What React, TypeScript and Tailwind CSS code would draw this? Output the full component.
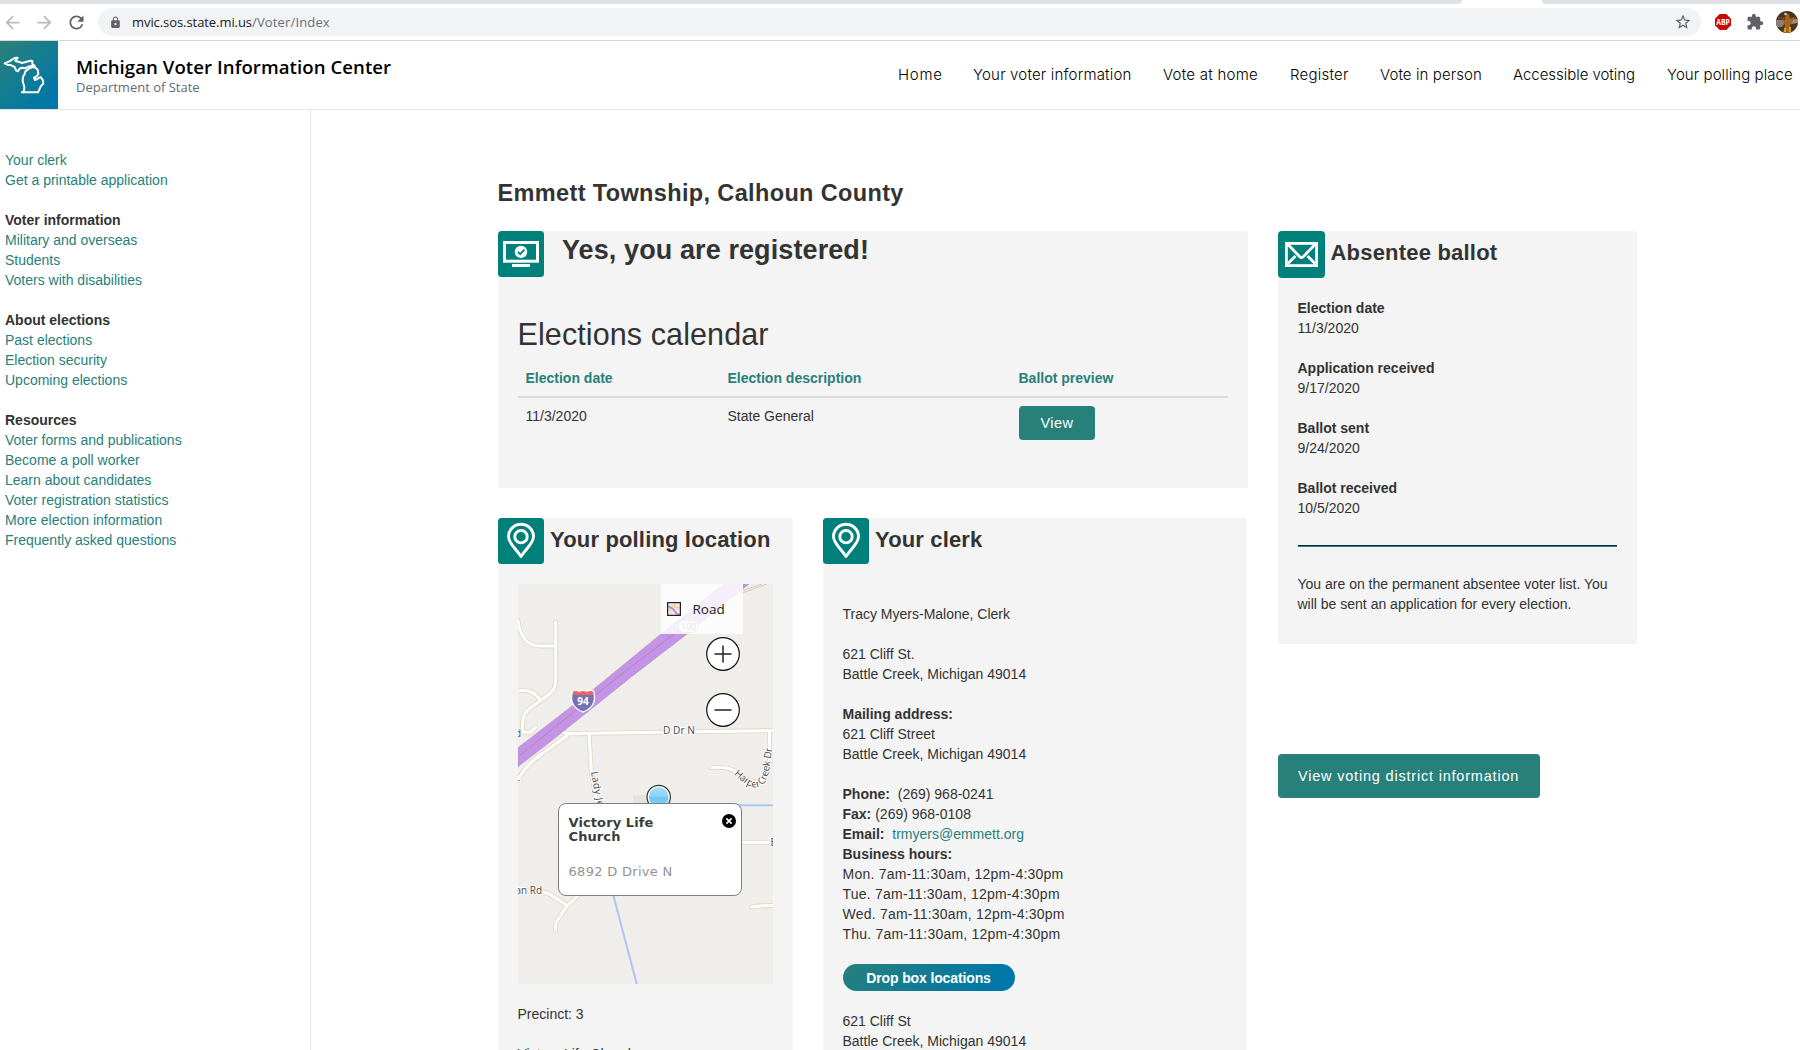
import React from "react";
import { MdArrowBack, MdArrowForward, MdExtension, MdLock, MdRefresh, MdStarBorder } from "react-icons/md";

const navItems = [
  { label: "Home", cls: "w-[43px] tracking-[0.7px]" },
  { label: "Your voter information", cls: "w-[158px] tracking-[0.19px]" },
  { label: "Vote at home", cls: "w-[95px] tracking-[0.25px]" },
  { label: "Register", cls: "w-[58px] tracking-[0.24px]" },
  { label: "Vote in person", cls: "w-[101px] tracking-[0.09px]" },
  { label: "Accessible voting", cls: "w-[122px] tracking-[-0.04px]" },
  { label: "Your polling place", cls: "w-[125px] tracking-[0.07px]" },
];

const sidebar = [
  { links: ["Your clerk", "Get a printable application"] },
  { title: "Voter information", links: ["Military and overseas", "Students", "Voters with disabilities"] },
  { title: "About elections", links: ["Past elections", "Election security", "Upcoming elections"] },
  {
    title: "Resources",
    links: [
      "Voter forms and publications",
      "Become a poll worker",
      "Learn about candidates",
      "Voter registration statistics",
      "More election information",
      "Frequently asked questions",
    ],
  },
];

const absentee = [
  ["Election date", "11/3/2020"],
  ["Application received", "9/17/2020"],
  ["Ballot sent", "9/24/2020"],
  ["Ballot received", "10/5/2020"],
];

const hours = ["Mon.", "Tue.", "Wed.", "Thu."];

function BrowserBar() {
  return (
    <div className="flex h-[41px] shrink-0 flex-col border-b border-[#d5d7da] bg-white">
      <div className="flex h-1 shrink-0">
        <div className="w-[1462px] rounded-br-[4px] bg-[#dee1e6]" />
        <div className="w-[80px]" />
        <div className="flex-1 rounded-bl-[4px] bg-[#dee1e6]" />
      </div>
      <div className="flex h-9 items-center">
        <div className="flex w-[98px] items-center gap-[11px] pl-[1.500px]">
          <MdArrowBack size={21} color="#b9bbbe" />
          <MdArrowForward size={21} color="#b9bbbe" />
          <MdRefresh size={21} color="#5f6368" />
        </div>
        <div className="flex h-7 w-[1603px] items-center rounded-full bg-[#f1f3f4] pr-[9px] pl-[11px] font-['Open_Sans',sans-serif] text-[13px] leading-[18px]">
          <MdLock size={13} color="#5f6368" />
          <span className="ml-[10px] tracking-[-0.07px] text-[#202124]">mvic.sos.state.mi.us</span>
          <span className="flex-1 tracking-[0.15px] text-[#6b6f74]">/Voter/Index</span>
          <MdStarBorder size={18} color="#5f6368" />
        </div>
        <div className="ml-[14px] flex w-[85px] items-center">
          <svg width="16" height="16" viewBox="0 0 16 16">
            <path d="M4.700 0h6.600L16 4.700v6.600L11.300 16H4.700L0 11.300V4.700z" fill="#cc0606" />
            <text x="8" y="10.900" textAnchor="middle" fontFamily="Open Sans, sans-serif" fontWeight="700" fontSize="8" textLength="13.600" lengthAdjust="spacingAndGlyphs" fill="#fff">ABP</text>
          </svg>
          <MdExtension size={18} color="#5f6368" className="ml-[14.500px]" />
          <svg width="22" height="22" viewBox="0 0 22 22" className="ml-[12.500px]">
            <clipPath id="avatar"><circle cx="11" cy="11" r="11" /></clipPath>
            <g clipPath="url(#avatar)">
              <rect width="22" height="22" fill="#4b3420" />
              <path d="M0 9h7l2 3-3 4H0z" fill="#8a8078" />
              <path d="M14 8h8v4l-7 1z" fill="#a98a6c" />
              <path d="M2 6h18v2H2z" fill="#6b4522" />
              <path d="M6 8l3 1 1-6 3 0 1 6 4-3-2 6-2 2 1 8H7l2-8z" fill="#a9651b" />
              <circle cx="9.500" cy="3" r="1.300" fill="#cfd3d8" />
              <path d="M8 17h2v4H8zM13 16h2v5h-2z" fill="#d0a026" />
            </g>
          </svg>
        </div>
      </div>
    </div>
  );
}

function Header() {
  return (
    <header className="flex h-[69px] shrink-0 border-b border-[#e6e6e6]">
      <div className="h-[68px] w-[58px] bg-[linear-gradient(135deg,#28817a_5%,#0077a8_85%)]">
        <svg width="58" height="68" viewBox="0 0 174 204" fill="none" stroke="#fff" strokeWidth="6" strokeLinejoin="round">
          <path d="M14 67L28 61 44 51 53 50 46 60 55 62 66 66 80 62 92 59 97 60 97 68 104 75 94 74 82 78 76 82 66 80 58 84 54 91 48 88 44 78 34 73 22 71Z" />
          <path d="M98 78L87 83 76 91 74 99 69 107 68 120 73 138 72 150 66 154 92 154 114 154 118 146 122 136 130 128 128 116 121 108 112 114 105 117 102 110 110 106 115 99 113 86 105 79Z" />
        </svg>
      </div>
      <div className="pt-[14px] pl-[18px] font-['Open_Sans',sans-serif]">
        <div className="text-[18.600px] leading-6 font-semibold tracking-[0.06px] whitespace-nowrap text-black">Michigan Voter Information Center</div>
        <div className="-mt-px text-[13px] leading-[18px] text-[#5f6b75]">Department of State</div>
      </div>
      <nav className="ml-auto flex gap-8 pt-6 pr-[8px] font-['Inter',sans-serif] text-[15px] leading-5 font-light text-black">
        {navItems.map((n) => (
          <a key={n.label} className={`${n.cls} whitespace-nowrap`}>{n.label}</a>
        ))}
      </nav>
    </header>
  );
}

function PinTile() {
  return (
    <svg width="46" height="46" viewBox="0 0 46 46" className="shrink-0">
      <rect width="46" height="46" rx="3.500" fill="#00807b" />
      <g fill="none" stroke="#fff" strokeWidth="2.900">
        <path d="M23 38.500C17.500 30 10.500 25.500 10.500 18.500a12.500 12.200 0 0 1 25 0C35.500 25.500 28.500 30 23 38.500Z" strokeLinejoin="round" />
        <circle cx="23" cy="18.700" r="6.200" />
      </g>
    </svg>
  );
}

function MonitorTile() {
  return (
    <svg width="46" height="46" viewBox="0 0 46 46" className="shrink-0">
      <rect width="46" height="46" rx="3.500" fill="#00807b" />
      <rect x="6.500" y="11.500" width="33" height="18.700" fill="none" stroke="#fff" strokeWidth="3" />
      <rect x="14" y="33" width="18" height="3" fill="#fff" />
      <circle cx="23" cy="20.900" r="6.200" fill="#fff" />
      <path d="M20 21l2.200 2.200 4.200-4.600" fill="none" stroke="#00807b" strokeWidth="1.900" />
    </svg>
  );
}

function EnvelopeTile() {
  return (
    <svg width="47" height="47" viewBox="0 0 47 47" className="shrink-0">
      <rect width="47" height="47" rx="4" fill="#00807b" />
      <g fill="none" stroke="#fff" strokeWidth="2.800">
        <rect x="8.400" y="12.400" width="30.200" height="22.200" />
        <path d="M10 13.500L21.500 25.500Q23.500 27.500 25.500 25.500L37 13.500M10 32.500L17.500 25M37 32.500L29.500 25" />
      </g>
    </svg>
  );
}

const roads = [
  "M0 37C2 53 10 62 22 62H37",
  "M37.700 38V99C37.700 104 35 107 30 111L11 125C5 130 4.500 135 4.500 148L12 148.500 18 143",
  "M0 106.700C12 106 17 108 22 116",
  "M-3 203C6 178 25 170 50 151",
  "M44 148C52 151 62 149.500 71 149.300L255 146.500",
  "M71 150L73.500 190 80 225",
  "M251.500 147V165C253 180 249 196 240 198C232 199 225 192 217 187 210 183 202 183 193.500 183.500",
  "M220 258.300H258",
  "M234 323Q239 321.500 258 321.500",
  "M-2 306L24 308C32 309 36 313 49 321.700M62 310L49 321.700 39 337Q37 340 37.500 346",
];

function PollingMap() {
  return (
    <div className="relative h-[400px] w-[255px] overflow-hidden bg-[#efeeea]">
      <svg width="255" height="400" viewBox="0 0 255 400" className="block">
        <rect x="115" y="211" width="16" height="12" fill="#e7e3dc" />
        <g fill="none" stroke="#e3d8c4" strokeWidth="4.800" strokeLinecap="round">
          {roads.map((d) => <path key={d} d={d} />)}
        </g>
        <g fill="none" stroke="#fff" strokeWidth="3" strokeLinecap="round">
          {roads.map((d) => <path key={d} d={d} />)}
        </g>
        <g fill="none" stroke="#adc6f3" strokeWidth="2">
          <path d="M215 221.300H255M95 310L119 401" />
        </g>
        <g fill="none" stroke="#cfc0ae" strokeWidth="0.800">
          <path d="M180 22L244 0M180 25L249 0" />
        </g>
        <path d="M0 163.700L75 105.700 143 50 205 0H231L169 50 112 94 32 158 0 182.700Z" fill="#c493e6" stroke="#b39ab8" strokeWidth="0.600" />
        <path d="M0 173L32 147 100 93 156 50 218 0" fill="none" stroke="#a98bb0" strokeWidth="1" />
        <rect x="160.500" y="36.500" width="20" height="12" rx="6" fill="#fff" stroke="#999" />
        <g fontFamily="Open Sans, sans-serif" fontSize="10" fill="#484848" stroke="#fff" strokeWidth="2" paintOrder="stroke">
          <text x="170.500" y="46" textAnchor="middle" fontSize="9" fill="#000" strokeWidth="0">100</text>
          <text x="145" y="150" fontSize="10" textLength="32" lengthAdjust="spacingAndGlyphs">D Dr N</text>
          <text x="-3" y="152.500">d</text>
          <text x="-2" y="201" fontSize="9">r</text>
          <text x="252.500" y="261.500">E</text>
          <text x="-2.500" y="310">an Rd</text>
          <text transform="translate(73 188) rotate(80)" textLength="42">Lady Jen</text>
          <path id="harper" d="M215.500 190C226 199 230 203.500 238 203.500C250 203 251 190 255 158" fill="none" stroke="none" />
          <text textLength="73"><textPath href="#harper">Harper Creek Dr</textPath></text>
        </g>
        <path d="M54.500 107L58.500 106.500 61 107.500 65 106.500 69 107.500 71.500 106.500 75.500 107C77 112 77 117 74.500 121 72 125 69 126.500 65 128 61 126.500 58 125 55.500 121 53 117 53 112 54.500 107Z" fill="#7472b5" stroke="#fff" strokeWidth="1.400" />
        <path d="M55 107.500L58.500 107 61 108 65 107 69 108 71.500 107 75 107.500V111H55Z" fill="#f2635f" />
        <text x="65" y="121.300" textAnchor="middle" fontFamily="Open Sans, sans-serif" fontWeight="700" fontSize="10" fill="#fff">94</text>
        <defs>
          <linearGradient id="pin" x1="0" y1="0" x2="0" y2="1">
            <stop offset="0" stopColor="#a5dcf8" />
            <stop offset="0.450" stopColor="#8fd3f8" />
            <stop offset="0.550" stopColor="#6cc7f6" />
            <stop offset="1" stopColor="#7fd2f9" />
          </linearGradient>
        </defs>
        <circle cx="140.700" cy="213" r="11.700" fill="#fff" stroke="#333" strokeWidth="1.200" />
        <circle cx="140.700" cy="213" r="9.800" fill="url(#pin)" />
      </svg>

      <div className="absolute top-0 left-[143px] flex h-[50px] w-[82px] items-center bg-white/85 pl-[6px]">
        <svg width="14" height="14" viewBox="0 0 14 14">
          <rect width="14" height="14" fill="#ece8e2" />
          <path d="M1 9L9 1M7 5l6 1" stroke="#f2cf9a" strokeWidth="1.500" />
          <path d="M1 4l5 3 4 5 3 1" stroke="#b98bd6" strokeWidth="2" fill="none" />
          <rect x="0.600" y="0.600" width="12.800" height="12.800" fill="none" stroke="#222" strokeWidth="1.200" />
        </svg>
        <span className="ml-[11.500px] font-['Open_Sans',sans-serif] text-[13.500px] leading-[18px] text-[#222]">Road</span>
      </div>

      <div className="absolute top-[53px] left-[188px] flex flex-col gap-[22px]">
        <svg width="34" height="34" viewBox="0 0 34 34">
          <circle cx="17" cy="17" r="16.300" fill="#fff" stroke="#111" strokeWidth="1.200" />
          <path d="M8.500 17h17M17 8.500v17" stroke="#222" strokeWidth="1.500" />
        </svg>
        <svg width="34" height="34" viewBox="0 0 34 34">
          <circle cx="17" cy="17" r="16.300" fill="#fff" stroke="#111" strokeWidth="1.200" />
          <path d="M8.500 17h17" stroke="#222" strokeWidth="1.500" />
        </svg>
      </div>

      <div className="absolute top-[219px] left-[40px] h-[93px] w-[184px] rounded-[8px] border border-[#808080] bg-white pt-[12px] pl-[9.500px] font-['DejaVu_Sans',sans-serif] text-[13px]">
        <div className="flex items-start leading-[14px]">
          <div className="w-[153px] font-bold tracking-[0.1px] text-[#3c3c3c]">Victory Life<br />Church</div>
          <svg width="14" height="14" viewBox="0 0 14 14" className="-mt-[2px]">
            <circle cx="7" cy="7" r="7" fill="#000" />
            <path d="M4.400 4.400l5.200 5.200M9.600 4.400L4.400 9.600" stroke="#fff" strokeWidth="1.700" />
          </svg>
        </div>
        <div className="mt-[20px] leading-4 tracking-[0.3px] text-[#929292]">6892 D Drive N</div>
      </div>
    </div>
  );
}

function RegisteredCard() {
  return (
    <section className="h-[257px] w-[750px] rounded-t-[3px] bg-[#f4f4f4]">
      <div className="flex h-[46px]">
        <MonitorTile />
        <h2 className="ml-[18px] pt-[4px] text-[27px] leading-[31px] font-bold tracking-[0.1px]">Yes, you are registered!</h2>
      </div>
      <div className="mx-5 pt-[40px]">
        <h3 className="-ml-[0.500px] text-[30.500px] leading-[34px] tracking-[0.1px]">Elections calendar</h3>
        <div className="mt-[17px] grid h-[30px] grid-cols-[202px_291px_1fr] border-b-2 border-[#dadada] pl-[7.500px] leading-5 font-bold text-[#28807b]">
          <span>Election date</span>
          <span>Election description</span>
          <span>Ballot preview</span>
        </div>
        <div className="grid grid-cols-[202px_291.500px_1fr] pt-2 pl-[7.500px]">
          <span>11/3/2020</span>
          <span>State General</span>
          <button className="flex h-[34px] w-[76px] items-center justify-center rounded-[4px] bg-[#28807b] text-[14.500px] tracking-[0.5px] text-white">View</button>
        </div>
      </div>
    </section>
  );
}

function PollingCard() {
  return (
    <section className="h-[540px] w-[295px] rounded-t-[3px] bg-[#f4f4f4]">
      <div className="flex h-[46px]">
        <PinTile />
        <h2 className="ml-[6px] pt-[9px] text-[22px] leading-[25px] font-bold tracking-[0.16px] whitespace-nowrap">Your polling location</h2>
      </div>
      <div className="mx-5 mt-5">
        <PollingMap />
        <div className="-ml-[0.500px] pt-5">
          <p>Precinct: 3</p>
          <p className="pt-5">Victory Life Church</p>
        </div>
      </div>
    </section>
  );
}

function ClerkCard() {
  return (
    <section className="h-[540px] w-[424px] rounded-t-[3px] bg-[#f4f4f4]">
      <div className="flex h-[46px]">
        <PinTile />
        <h2 className="ml-[6px] pt-[9px] text-[22px] leading-[25px] font-bold tracking-[0.15px]">Your clerk</h2>
      </div>
      <div className="pt-10 pl-[19.500px]">
        <p>Tracy Myers-Malone, Clerk</p>
        <p className="pt-5">621 Cliff St.</p>
        <p>Battle Creek, Michigan 49014</p>
        <p className="pt-5 font-bold">Mailing address:</p>
        <p>621 Cliff Street</p>
        <p>Battle Creek, Michigan 49014</p>
        <p className="pt-5"><b>Phone:</b>&nbsp; (269) 968-0241</p>
        <p><b>Fax:</b> (269) 968-0108</p>
        <p><b>Email:</b>&nbsp; <a className="text-[#28807b]">trmyers@emmett.org</a></p>
        <p className="font-bold">Business hours:</p>
        {hours.map((d) => (
          <p key={d} className="tracking-[0.22px]">{d} 7am-11:30am, 12pm-4:30pm</p>
        ))}
        <button className="mt-5 flex h-[27px] w-[172px] items-center justify-center rounded-full bg-[linear-gradient(135deg,#28807b,#0077a8_85%)] font-bold tracking-[-0.13px] text-white">Drop box locations</button>
        <p className="pt-5">621 Cliff St</p>
        <p>Battle Creek, Michigan 49014</p>
      </div>
    </section>
  );
}

function AbsenteeCard() {
  return (
    <section className="h-[413px] w-[359px] rounded-t-[3px] bg-[#f4f4f4]">
      <div className="flex h-[47px]">
        <EnvelopeTile />
        <h2 className="ml-[5.500px] pt-[9px] text-[22px] leading-[25px] font-bold tracking-[0.2px]">Absentee ballot</h2>
      </div>
      <dl className="flex flex-col gap-5 pt-5 pl-[19.500px]">
        {absentee.map(([k, v]) => (
          <div key={k}>
            <dt className="font-bold">{k}</dt>
            <dd>{v}</dd>
          </div>
        ))}
      </dl>
      <div className="mx-5 mt-[27px] h-[2px] border-t border-[#0b3136] bg-[#28807b]" />
      <p className="pt-[27px] pr-4 pl-[19.500px]">You are on the permanent absentee voter list. You will be sent an application for every election.</p>
    </section>
  );
}

export default function App() {
  return (
    <div className="flex h-[1050px] w-[1800px] flex-col overflow-hidden bg-white font-['Liberation_Sans',Arial,sans-serif] text-[14px] leading-5 text-[#333]">
      <BrowserBar />
      <Header />
      <div className="flex flex-1">
        <aside className="flex w-[311px] shrink-0 flex-col gap-5 border-r border-[#e6e6e6] pt-10 pl-[5px]">
          {sidebar.map((g, i) => (
            <div key={i} className="flex flex-col">
              {g.title && <span className="font-bold">{g.title}</span>}
              {g.links.map((l) => (
                <a key={l} className="text-[#28807b]">{l}</a>
              ))}
            </div>
          ))}
        </aside>
        <main className="h-[940px] pt-[69px] pl-[187px]">
          <h1 className="-ml-[0.500px] text-[23.500px] leading-[28px] font-bold tracking-[0.36px]">Emmett Township, Calhoun County</h1>
          <div className="mt-6 flex gap-[30px]">
            <div className="flex flex-col gap-[30px]">
              <RegisteredCard />
              <div className="flex gap-[30px]">
                <PollingCard />
                <ClerkCard />
              </div>
            </div>
            <div className="flex flex-col items-start gap-[110px]">
              <AbsenteeCard />
              <button className="h-[44px] w-[262px] rounded-[4px] bg-[#28807b] pl-5 text-left text-[14.500px] tracking-[0.8px] text-white">View voting district information</button>
            </div>
          </div>
        </main>
      </div>
    </div>
  );
}
